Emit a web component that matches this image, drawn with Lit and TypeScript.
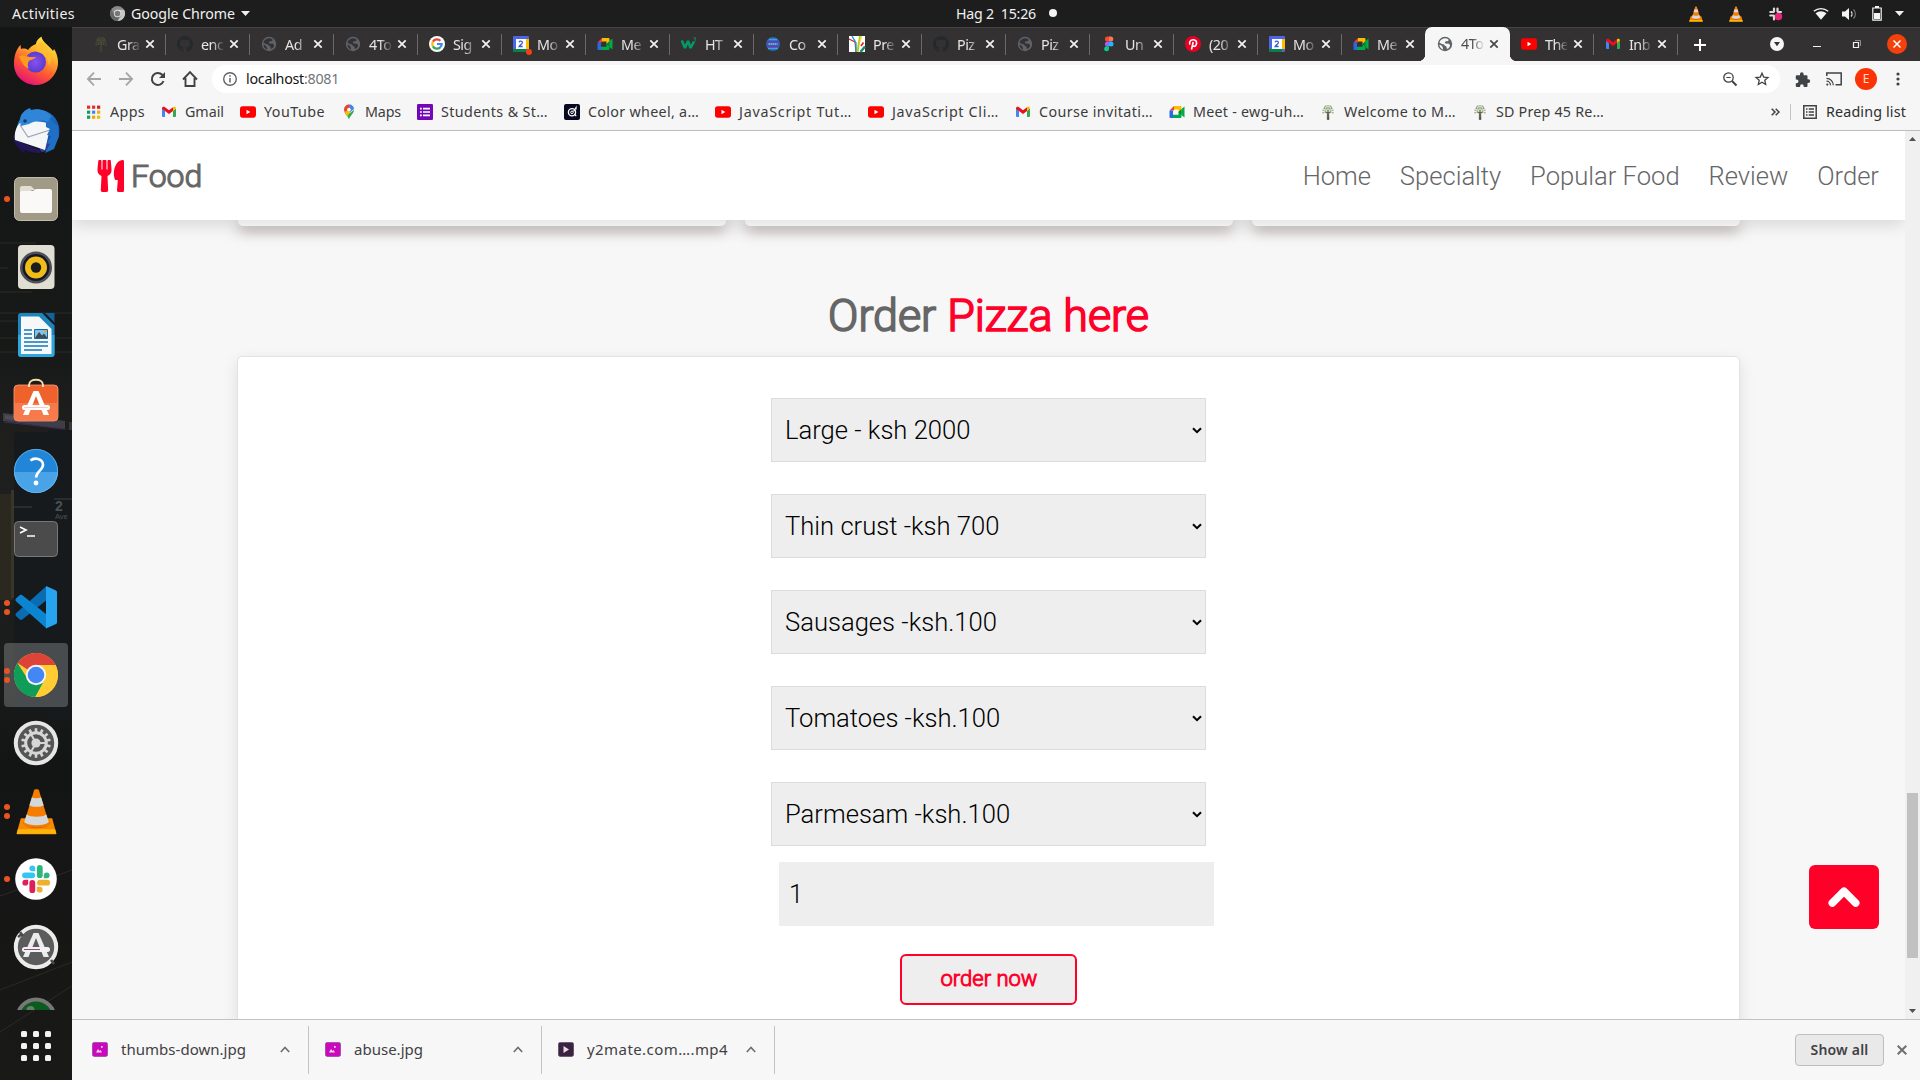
import { LitElement, html, svg, css, nothing, TemplateResult } from "lit";
import { customElement, property, query } from "lit/decorators.js";
import { classMap } from "lit/directives/class-map.js";

/* ---------- small icons (16 x 16 grid) ---------- */
const g16 = (body: unknown, size = 16) =>
  html`<svg width=${size} height=${size} viewBox="0 0 16 16" fill="none">${body}</svg>`;

const tree = (dark: boolean) => g16(svg`
  <g stroke=${dark ? "#4c5236" : "#8fa27a"} stroke-width="1.300" stroke-dasharray="1.500 .7">
    <path d="M8 8L2.500 6M8 7L4 2.500M8 7V1M8 7l4-4.500M8 8l5.500-2M6 8L2 9M10 8l4 1M3.500 4.500l3 1M12.500 4.500l-3 1M5.500 1.500l1.500 3M10.500 1.500l-1.500 3"/></g>
  <path d="M7.200 15.500L7.500 8h1l.5 7.500zM6 8l2 2.500L10 8" fill=${dark ? "#3e4630" : "#4c4a38"} stroke=${dark ? "#3e4630" : "#4c4a38"} stroke-width=".6"/>`);
const github = () => g16(svg`<path fill="#24292e" d="M8 0a8 8 0 0 0-2.530 15.590c.4.070.55-.17.55-.38v-1.500C3.780 14.200 3.300 12.800 3.300 12.800c-.36-.92-.9-1.180-.9-1.180-.72-.5.060-.48.060-.48.800.060 1.230.82 1.230.82.71 1.220 1.870.87 2.330.66.070-.52.280-.87.500-1.070C4.750 11.340 2.880 10.650 2.880 7.580c0-.87.310-1.580.82-2.150-.08-.2-.36-1.020.080-2.120 0 0 .67-.21 2.200.82a7.600 7.600 0 0 1 4 0c1.530-1.030 2.200-.82 2.200-.82.440 1.100.160 1.920.080 2.120.510.570.820 1.280.820 2.150 0 3.080-1.880 3.760-3.660 3.960.290.240.540.720.540 1.480v2.200c0 .21.150.46.550.38A8 8 0 0 0 8 0z"/>`);
const globe = (bg: string) => g16(svg`<circle cx="8" cy="8" r="7.200" fill="#5f6368"/>
  <path fill=${bg} d="M8.500 2.200c1.500.2 2.600.8 3.500 1.800l-1.600 1.200-1.700.1-1 1.300 1.300 1.200 2.200-.2 1.800 1.200c.3 1.500-.7 3-2 3.900l-1.300-.2-.2-2-1.700-.7-.6-1.400-2.400-.5L2.400 6.500C3 4 5.500 2.200 8.500 2.200zM2.300 8.600l2.500 1.200 1 1.600.4 2.300C4 13 2.500 11 2.300 8.600z"/>`);
const google = () => g16(svg`<circle cx="8" cy="8" r="8" fill="#fff"/>
  <g stroke-width="2.200"><path stroke="#ea4335" d="M3.900 5.600A4.700 4.700 0 0 1 11.400 4.800"/><path stroke="#fbbc05" d="M3.900 10.400a4.800 4.800 0 0 1 0-4.800"/>
  <path stroke="#34a853" d="M3.900 10.400a4.700 4.700 0 0 0 7.300 1"/><path stroke="#4285f4" d="M8 8h4.700a4.700 4.700 0 0 1-1.600 3.500"/></g>`);
const calendar = (dot: boolean) => html`<svg width="20" height="20" viewBox="0 0 20 20" fill="none" class="cal">${svg`
  <rect width="16" height="16" rx="1" fill="#4b67e8"/><path fill="#fbbc04" d="M13 3h3v10h-3z"/><path fill="#0b8043" d="M0 13h13v3H0z"/>
  <path fill="#fff" d="M3 3h10v10H3z"/><path d="M6 6.200c.8-1.600 3.600-1.200 3.400.6-.1 1.300-2.300 2-3.300 3.700h3.600" stroke="#3c5fd0" stroke-width="1.300"/>
  ${dot ? svg`<circle cx="16" cy="16" r="3" fill="#f4400b"/>` : nothing}`}</svg>`;
const meet = () => g16(svg`<path fill="#ea4335" d="M.5 6.500L5 2v4.500z"/><path fill="#fbbc04" d="M5 2h6.500a1 1 0 0 1 1 1v3.500L9.500 8V5.500H5z"/>
  <path fill="#2f66e8" d="M.5 6.500H4v5H.5zM.5 11.500H4V14H1.500a1 1 0 0 1-1-1z"/><path fill="#00ac47" d="M4 10.800h5.500V8l3-1.500V13a1 1 0 0 1-1 1H4z"/>
  <path fill="#00832d" d="M9.500 8l3-3v6z"/><path fill="#00ac47" d="M12.500 5L15.500 2.600v10.800L12.500 11z"/>`);
const w3 = () => g16(svg`<path d="M.8 4.500L4 12l3-7 2.500 7L13 5.500" stroke="#059862" stroke-width="2.600" stroke-linejoin="bevel"/>
  <path d="M12.600 1.800h2.200l-1.200 1.500c1.600 0 1.500 2.200-.2 2.100" stroke="#059862" stroke-width=".9"/>`);
const coolors = () => g16(svg`<circle cx="8" cy="8" r="7" fill="#2c62b8"/><path d="M4 3.500h8M3 12.500h10" stroke="#39a6d8" stroke-width="1.500"/>
  <path d="M1.800 6h12.400M2.500 10.500h11" stroke="#6b3fa8" stroke-width="1.600"/><path d="M3.500 8h9" stroke="#cfe6fa" stroke-width="1.200" stroke-dasharray="1.500 .5"/>`);
const prezi = () => g16(svg`<path fill="#fff" d="M0 0h16v16H0z"/><path d="M0 3l6 3 1 10" stroke="#d22" stroke-width="1.200"/><path d="M3 0l4 7v9" stroke="#0aa0e0" stroke-width="1.400"/>
  <path d="M11 0L8.500 16" stroke="#b8cc10" stroke-width="2"/><path d="M14.500 6.500L12 10" stroke="#e22" stroke-width="1.800"/><path d="M16 10.500L11.500 16" stroke="#0a8f6a" stroke-width="2.400"/><path d="M13 0l-2 6" stroke="#fbe14a"/>`);
const figma = () => html`<svg width="16" height="16" viewBox="0 0 16 16">${svg`<path fill="#f24e1e" d="M8 .5H6.400a2.500 2.500 0 0 0 0 5H8z"/><path fill="#ff7262" d="M8 .5h1.800a2.500 2.500 0 0 1 0 5H8z"/>
  <path fill="#a259ff" d="M8 5.500H6.400a2.500 2.500 0 0 0 0 5H8z"/><circle cx="10" cy="8" r="2.500" fill="#1abcfe"/><path fill="#0acf83" d="M6.400 10.500H8V13a2.400 2.400 0 1 1-1.600-2.500z"/>`}</svg>`;
const pinterest = () => g16(svg`<circle cx="8" cy="8" r="8" fill="#e60023"/><path d="M5 8.700C3.700 6.500 5.300 3.700 8.200 3.700c3.500 0 4.300 3.800 2.500 5.900-1 1.100-2.600.9-3-.2M8.200 6L6.500 13.500" stroke="#fff" stroke-width="1.600"/>`);
const youtube = () => g16(svg`<rect y="2.300" width="16" height="11.400" rx="2.600" fill="#f00"/><path fill="#fff" d="M6.500 5.800v4.400L10.300 8z"/>`);
const gmail = () => g16(svg`<path fill="#4285f4" d="M1 4.500l3 2.300V13H2a1 1 0 0 1-1-1z"/><path fill="#34a853" d="M12 6.800l3-2.300V12a1 1 0 0 1-1 1h-2z"/>
  <path fill="#ea0f1e" d="M1 4.500C1 2.800 2.800 2.400 4 3.300L8 6.300l4-3V7l-4 3-4-3-3-2z"/><path fill="#fbbc04" d="M12 3.300c1.300-.9 3-.4 3 1.200L12 7z"/>`);
const apps = () => g16(svg`${[0, 1, 2].map(r => [0, 1, 2].map(c => svg`<rect x=${1 + c * 5} y=${1.600 + r * 5} width="3.200" height="3.200"
  fill=${[["#e53030", "#e53030", "#e02020"], ["#12a058", "#4285f4", "#f2b10c"], ["#12a058", "#f5a30c", "#f5b90c"]][r][c]}/>`))}`);
const maps = () => g16(svg`<path fill="#34a853" d="M3.500 8.500c1 2 3.500 3.500 4.500 7 1-4 5-6 5-9.800L9 9z"/><path fill="#fbbc04" d="M3.500 8.500L9 3l2 3-4.500 6z"/>
  <path fill="#4285f4" d="M8 .5c2 0 4.500 1.500 5 4.500L9 8z"/><path fill="#ea4335" d="M3 5.500C3 2.500 5.500.5 8 .5L9 3 4 8.500A6 6 0 0 1 3 5.500z"/><circle cx="8" cy="5.500" r="1.800" fill="#fff"/><path fill="#4285f4" d="M8.500.6c2 .2 4 1.600 4.300 3.600L9.500 5z"/>`);
const forms = () => g16(svg`<rect width="16" height="16" rx="1.300" fill="#7406b8"/><path d="M3 4.600h1.800M3 8h1.800M3 11.400h1.800M6 4.600h7M6 8h7M6 11.400h7" stroke="#fff" stroke-width="1.700"/>`);
const wheel = () => g16(svg`<rect width="16" height="16" rx="2" fill="#080a20"/><circle cx="8" cy="8.300" r="3.600" stroke="#fff" stroke-width="1.300"/><circle cx="8" cy="8.300" r="1.300" stroke="#fff"/><path d="M9.500 7.500L12 3.500v2M10.500 10l1.700 2.200" stroke="#fff" stroke-width="1.200"/>`);

const cone = (size: number) => html`<svg width=${size} height=${size} viewBox="0 0 48 48">${svg`
  <path fill="#f78a00" d="M8 31h32l4.300 15.500a.7.700 0 0 1-.7.800H4.400a.7.700 0 0 1-.7-.8z"/><path fill="#fcb40a" d="M5 42h38l1.300 4.600H3.700z"/>
  <path fill="#c85f06" d="M10.500 35h27c1 8-28 8-27 0z"/>
  <path fill="#f57c00" d="M21.500 2.200c0-1.400 5-1.400 5 0L37 37c-2 4.500-24 4.500-26 0z"/>
  <path fill="#d5d8db" d="M19.300 9.500c2 1.400 7.400 1.400 9.400 0l2.600 8c-3 2.300-11.600 2.300-14.600 0zM13.900 27c4 3 16.200 3 20.200 0l2.500 8c-5 4-20.200 4-25.200 0z"/>`}</svg>`;

/* ---------- dock icons (48 x 48 grid) ---------- */
const g48 = (body: unknown) => html`<svg width="48" height="48" viewBox="0 0 48 48" fill="none">${body}</svg>`;
const spokes = Array.from({ length: 14 }, (_, i) => i * (360 / 14));

const dockIcons: { art: () => TemplateResult; dots?: number; active?: boolean }[] = [
  { art: () => g48(svg`<defs><linearGradient id="ff" x1=".8" y1="0" x2=".3" y2="1"><stop offset="0" stop-color="#fff044"/><stop offset=".35" stop-color="#ffb02a"/><stop offset=".65" stop-color="#ff5a30"/><stop offset="1" stop-color="#e4107a"/></linearGradient>
    <radialGradient id="fp"><stop offset="0" stop-color="#8a50f0"/><stop offset="1" stop-color="#5a3bd0"/></radialGradient></defs>
    <path fill="url(#ff)" d="M4 13c2-4 3-6 4.500-7l.5 4c2.500-.7 5-.5 7 1 2-3 5-5 8-6 0-3 3-6 5.500-7.500C30 3 38 7 41 12l1-2c4 6 5 14 3 20-3 9-11 16-21 16C12 46 2 37 2 25c0-5 .5-8 2-12z"/>
    <circle cx="23.500" cy="23" r="10.500" fill="url(#fp)"/><path fill="#ff9a20" d="M7 17c5-2 8 2 17 1-2 3-5 2-7 4-2 3-1 6 0 8-6-3-8-8-10-13z"/><path fill="#ffbd30" d="M30 3c9 6 11 16 7 24-1-10-6-13-12-14l-1-6z" opacity=".75"/>`) },
  { art: () => g48(svg`<defs><linearGradient id="tb" x1="0" y1="0" x2=".6" y2="1"><stop offset="0" stop-color="#3593e2"/><stop offset=".55" stop-color="#1b66bd"/><stop offset="1" stop-color="#2e3c98"/></linearGradient></defs>
    <path fill="#22144e" d="M1 28c0 8 5 15 12 18l-1-4 10 4 6-6z"/><circle cx="26" cy="24" r="21.500" fill="url(#tb)"/>
    <path fill="#141515" d="M3 33l12 13 15 2-3-8z"/><path fill="#24165a" d="M3 33l27 11-2 2C17 46 7 42 3 33z"/>
    <path fill="#f4f6f8" d="M8 16c6-3 24-2 31 1L33 43 3 33C2 26 4 20 8 16z"/><path d="M8 18l8 12 22-7" stroke="#9aa4b0" stroke-width="1.100"/>
    <path fill="#1e70c4" d="M34 9l12 10 1 10-5 13-9 4 5-9-3-1 4-7-4-1 3-6-4-2z"/>
    <path fill="#2f86d8" d="M9 19C6 10 10 4 18 1l1 2c8-2 16 1 20 6l-3 6c-7-3-13-1-19 2z"/><circle cx="13" cy="14" r="1.800" fill="#173a66"/>`) },
  { dots: 1, art: () => g48(svg`<rect x="2.500" y="2.500" width="43" height="43" rx="5" fill="#a19a86" stroke="#c2bcab"/><path fill="#e3ded2" d="M8 13a2 2 0 0 1 2-2h9l4 4h-3l-12 8z"/><path fill="#faf9f7" d="M8 18a2 2 0 0 1 2-2h11l3-2h14a2 2 0 0 1 2 2v20a2 2 0 0 1-2 2H10a2 2 0 0 1-2-2z"/>`) },
  { art: () => g48(svg`<rect x="6" y="2" width="36.500" height="44" rx="4" fill="#e0ddd2"/><circle cx="24" cy="24.500" r="16" fill="#4e4f56"/><circle cx="24" cy="24.500" r="13.500" fill="#16162a"/><circle cx="24" cy="24.500" r="11" fill="#f0bd18"/><circle cx="24" cy="24.500" r="5.200" fill="#1c1c1c"/>`) },
  { art: () => g48(svg`<path fill="#1d86bd" d="M9 2h21l12.500 12.500V43a3 3 0 0 1-3 3H9a3 3 0 0 1-3-3V5a3 3 0 0 1 3-3z"/><path fill="#2fa6dc" d="M6 24h36.500v19a3 3 0 0 1-3 3H9a3 3 0 0 1-3-3z"/><path fill="#f6f8fa" d="M9 5.500h18L39.500 18v25H9z"/><path fill="#11639a" d="M33 2h9.500v9.500z"/>
    <path d="M12 19h8M12 23h8M12 27h8M12 31h24M12 35h24M12 39h18" stroke="#1477b8" stroke-width="1.700"/><path fill="#7cc4ea" stroke="#16689c" d="M22.500 18.500h13v9h-13z"/><path fill="#404b54" d="M23 27l4-6 3 3.500 2-2 3.500 4.500z"/><circle cx="33.500" cy="20" r="1.300" fill="#f5a020"/>`) },
  { art: () => g48(svg`<rect x="2" y="6" width="44" height="36" rx="4" fill="#f0622c" stroke="#f6a080" stroke-width=".8"/><path fill="#f8845a" opacity=".7" d="M2.500 24h43v14a4 4 0 0 1-4 4h-35a4 4 0 0 1-4-4z"/>
    <path d="M17 8V6c0-7 14-7 14 0v2" stroke="#f6dcae" stroke-width="2"/><path fill="#fff" d="M21.500 12h5L37 36h-5.500L24 17l-7.500 19H11z"/><rect x="10" y="26" width="28" height="5" rx="2.500" fill="#fff"/><path d="M12 28.500h24" stroke="#f3c0b8" stroke-width=".8"/>`) },
  { art: () => g48(svg`<circle cx="24" cy="24" r="22" fill="#2286d8"/><path fill="#4aa3e6" d="M2 25a22 21 0 0 0 44 0z"/><circle cx="24" cy="24" r="21.600" stroke="#69b7ee" stroke-width=".8"/><path d="M18.500 13.500c4-3.500 12-2 12.500 4 .4 5.500-6.500 6-7 13" stroke="#fff" stroke-width="2.600"/><circle cx="24" cy="36" r="2.400" fill="#fff"/>`) },
  { art: () => g48(svg`<rect x="2.500" y="6.500" width="43" height="35" rx="4" fill="#4b4b4b" stroke="#787878"/><path d="M8 12l6 3-6 3M15 21h8" stroke="#fff" stroke-width="1.700"/>`) },
  { dots: 2, art: () => g48(svg`<path fill="#0a6cb2" d="M4 33l3.500 3.300c.8.700 2 .8 2.800.1L34 17.500V3.500L4 30.200a2 2 0 0 0 0 2.800z"/><path fill="#0b85d0" d="M4 15.500l3.500-3.200c.8-.7 2-.8 2.800-.1L34 31v14L4 18.300a2 2 0 0 1 0-2.800z"/><path fill="#27a4f0" d="M34 3l10 4.500c.7.400 1 1 1 1.700v30c0 .8-.4 1.500-1 1.800L34 45.500z"/>`) },
  { dots: 2, active: true, art: () => g48(svg`<circle cx="24" cy="24" r="22" fill="#fc3"/><path fill="#dd4437" d="M24 24L5.500 12A22 22 0 0 1 43.500 14H24z"/><path fill="#109d58" d="M5.500 12a22 22 0 0 0 17.800 34L33 28l-9-4-9 3z"/><path fill="#fc3" d="M43.500 14A22 22 0 0 1 23.300 46L33 29l-2-15z"/><circle cx="24" cy="24" r="10.200" fill="#f4f4f4"/><circle cx="24" cy="24" r="8.300" fill="#4486f4"/>`) },
  { art: () => g48(svg`<circle cx="24" cy="24" r="20.200" fill="#555" stroke="#e6e6e6" stroke-width="4"/><circle cx="24" cy="24" r="10.300" stroke="#d6d6d6" stroke-width="3"/>${spokes.map(a => svg`<path transform=${`rotate(${a} 24 24)`} fill="#d6d6d6" d="M22.700 13v-3.800h2.600V13z"/>`)}
    <circle cx="24" cy="24" r="4.600" fill="#d6d6d6"/><path d="M24 24h10M24 24l-5-8.700M24 24l-5 8.700" stroke="#d6d6d6" stroke-width="2"/>`) },
  { dots: 2, art: () => cone(47) },
  { dots: 1, art: () => g48(svg`<circle cx="24" cy="24" r="20.800" fill="#fff"/><g stroke-width="5.800" stroke-linecap="round">
    <path stroke="#36c5f0" d="M13 20.300h7.200"/><path stroke="#2eb67d" d="M27.800 13v7.200"/><path stroke="#ecb22e" d="M28 27.700h7.200"/><path stroke="#e01e5a" d="M20.300 28v7.200"/></g>
    <path fill="#36c5f0" d="M23.200 16.200h-2.900a2.900 2.900 0 1 1 2.900-2.900z"/><path fill="#2eb67d" d="M31.800 23.200v-2.900a2.900 2.900 0 1 1 2.900 2.900z"/><path fill="#ecb22e" d="M24.800 31.800h2.900a2.900 2.900 0 1 1-2.900 2.900z"/><path fill="#e01e5a" d="M16.200 24.800v2.900a2.900 2.900 0 1 1-2.900-2.900z"/>`) },
  { art: () => g48(svg`<circle cx="24" cy="24" r="20.200" fill="#5c5c5c" stroke="#ececec" stroke-width="4"/><path d="M8 9l3 4M39 37l3 4M6 14l4-3" stroke="#4a4a4a" stroke-width="2.500"/><path fill="#ececec" d="M21.500 10h5L37 34h-5.500L24 15l-7.500 19H11z"/><rect x="10" y="24" width="28" height="5" rx="2.500" fill="#f2f2f2"/><path d="M12 26.500h16" stroke="#8c4a8c"/>`) },
  { art: () => g48(svg`<circle cx="24" cy="27" r="18.500" fill="#0b5a1e" stroke="#777" stroke-width="4"/><circle cx="18.500" cy="19" r="4" fill="#5f7f66"/>`) },
];

/* A single line of text tracked so that it fills a given width. */
@customElement("fit-text")
export class FitText extends LitElement {
  static styles = css`
    :host { display: inline-block; white-space: pre; }
    .line { display: inline-block; }
  `;
  @property() text = "";
  @property({ type: Number }) w = 0;
  @query(".line") line!: HTMLElement;

  updated() {
    this.line.style.letterSpacing = "0px";
    const natural = this.line.getBoundingClientRect().width;
    this.line.style.letterSpacing = `${(this.w - natural) / this.text.length}px`;
  }
  render() {
    return html`<span class="line">${this.text}</span>`;
  }
}
const fit = (text: string, w: number) => html`<fit-text .text=${text} .w=${w}></fit-text>`;

@customElement("desktop-dock")
export class DesktopDock extends LitElement {
  static styles = css`
    :host { display: flex; flex-direction: column; width: 72px; height: 1053px; background: #141515; position: relative; overflow: hidden; font-family: "Liberation Sans", sans-serif; }
    .wall { position: absolute; inset: 0; }
    .list { display: flex; flex-direction: column; padding-top: 2px; height: 981px; overflow: hidden; position: relative; }
    .slot { display: flex; align-items: center; flex: none; height: 68px; position: relative; }
    .plate { display: flex; align-items: center; justify-content: center; width: 64px; height: 64px; margin-left: 4px; border-radius: 4px; }
    .plate.active { background: rgba(255, 255, 255, 0.22); }
    .dots { position: absolute; left: 4px; top: 0; bottom: 0; display: flex; flex-direction: column; justify-content: center; gap: 3px; }
    .dot { width: 6px; height: 6px; border-radius: 50%; background: #e95420; }
    .grid { display: grid; grid-template-columns: repeat(3, 6px); gap: 6px; margin: 21px auto 0 21px; position: relative; }
    .grid i { width: 6px; height: 6px; border-radius: 1.500px; background: #f3f3f3; }
    svg { display: block; overflow: visible; }
  `;
  render() {
    return html`
      <svg class="wall" width="72" height="1053" viewBox="0 27 72 1053">${svg`
        <defs><linearGradient id="wg" x1="0" y1="0" x2="0" y2="1"><stop offset="0" stop-color="#141515"/><stop offset=".3" stop-color="#171918"/><stop offset=".4" stop-color="#1f201e"/><stop offset=".6" stop-color="#1b1d1d"/><stop offset=".7" stop-color="#131414"/><stop offset="1" stop-color="#191917"/></linearGradient></defs>
        <path fill="url(#wg)" d="M0 27h72v1053H0z"/>
        <path d="M0 243h36M0 268h8M0 292h32M0 313h72M0 321h40M0 338h72M0 352h72" stroke="#302f26" stroke-width="1" opacity=".8"/>
        <path fill="#171a1d" d="M14 432h34v280H14zM48 430h24v290H48z"/><path fill="#3f3e46" d="M3 413l62 8v8L3 421z"/><path d="M4 422l61 7" stroke="#3a2e62" stroke-width="1.200"/>
        <path fill="#6a6a6e" opacity=".35" d="M5 415l20 3v4l-20-3zM69 422h3v8h-3z"/>
        <path fill="#2b281f" d="M0 494h13v106H0z"/><path fill="#38352a" d="M11 490h3v108h-3z"/><path d="M54 499h18M14 507h18" stroke="#3c4042"/>
        <path d="M0 896l72-26M0 990l72-28M0 1032l72-46" stroke="#2a2a28"/>
        <text x="55" y="511" font-size="14" font-weight="700" fill="#4c5052">2</text><text x="55" y="519" font-size="7.500" fill="#4c5052">Ave</text>`}</svg>
      <div class="list">${dockIcons.map(d => html`
        <div class="slot">
          <div class=${classMap({ plate: true, active: !!d.active })}>${d.art()}</div>
          <div class="dots">${Array.from({ length: d.dots ?? 0 }, () => html`<span class="dot"></span>`)}</div>
        </div>`)}</div>
      <div class="grid">${Array.from({ length: 9 }, () => html`<i></i>`)}</div>`;
  }
}

const tabs: [() => TemplateResult, string][] = [
  [() => tree(true), "Gra"], [github, "enc"], [() => globe("#333132"), "Ad"], [() => globe("#333132"), "4To"], [google, "Sig"],
  [() => calendar(true), "Mo"], [meet, "Me"], [w3, "HT"], [coolors, "Co"], [prezi, "Pre"], [github, "Piz"], [() => globe("#333132"), "Piz"],
  [figma, "Un"], [pinterest, "(20"], [() => calendar(false), "Mo"], [meet, "Me"], [() => globe("#f6f6f6"), "4To"], [youtube, "The"], [gmail, "Inb"],
];
const ACTIVE_TAB = 16;

const bookmarks: [() => TemplateResult, string, number][] = [
  [apps, "Apps", 35], [gmail, "Gmail", 39], [youtube, "YouTube", 61], [maps, "Maps", 36], [forms, "Students & St…", 107],
  [wheel, "Color wheel, a…", 111], [youtube, "JavaScript Tut…", 113], [youtube, "JavaScript Cli…", 107], [gmail, "Course invitati…", 114],
  [meet, "Meet - ewg-uh…", 111], [() => tree(false), "Welcome to M…", 112], [() => tree(false), "SD Prep 45 Re…", 108],
];

@customElement("browser-chrome")
export class BrowserChrome extends LitElement {
  static styles = css`
    :host { display: block; font: 14.300px "Noto Sans", sans-serif; color: #3c3c3c; }
    svg { display: block; overflow: visible; flex: none; }
    .strip { display: flex; height: 34px; box-sizing: border-box; padding-left: 9px; background: #333132; border-top: 1px solid #454344; color: #e6e6e6; }
    .tab { display: flex; align-items: center; box-sizing: border-box; width: 84px; padding: 0 10px 1px 12px; position: relative; }
    .tab::before { content: ""; position: absolute; left: 0; top: 6px; width: 1px; height: 21px; background: #6b696a; }
    .tab.plain::before { display: none; }
    .ico { width: 16px; height: 16px; flex: none; }
    .label { width: 22px; white-space: nowrap; margin-left: 8px; letter-spacing: -0.5px; -webkit-mask-image: linear-gradient(90deg, #000 50%, rgba(0, 0, 0, 0.15)); flex: none; }
    .close { margin-left: 6px; }
    .tab.active { background: #f6f6f6; color: #4a4c50; border-radius: 7px 7px 0 0; width: 85px; margin: -1px -1px 0 0; z-index: 1; }
    .tab.active::after { content: ""; position: absolute; bottom: 0; left: -7px; right: -7px; height: 7px;
      background: radial-gradient(circle at 0 0, transparent 7px, #f6f6f6 7.500px) left / 7px 7px no-repeat, radial-gradient(circle at 100% 0, transparent 7px, #f6f6f6 7.500px) right / 7px 7px no-repeat; }
    .plus { display: flex; align-items: center; width: 46px; box-sizing: border-box; padding-left: 16px; border-left: 1px solid #6b696a; height: 21px; margin-top: 6px; }
    .win { display: flex; align-items: center; margin-left: auto; padding-right: 3px; padding-bottom: 1px; }
    .cell40 { width: 40px; display: flex; justify-content: center; }
    .bar { display: flex; align-items: center; height: 36px; background: #f6f6f6; padding: 0 6px; }
    .cell { width: 32px; display: flex; justify-content: center; flex: none; }
    .url { display: flex; align-items: center; flex: 1; height: 28px; margin: 0 6px; border-radius: 14px; background: #fff; padding: 0 2px 0 11px; box-sizing: border-box; }
    .url .info { margin-right: 9px; }
    .url fit-text { line-height: 20px; margin-top: -2px; }
    .host { color: #151515; }
    .port { color: #72757a; flex: 1; }
    .avatar { width: 22px; height: 22px; border-radius: 50%; background: #fb3305; color: #ffe0d8; font-size: 12px; line-height: 22px; text-align: center; }
    .marks { display: flex; align-items: center; height: 29px; padding: 0 14px 4px; background: #f6f6f6; border-bottom: 1px solid #bdbdbd; gap: 16px; }
    .mark { display: flex; align-items: center; gap: 8px; height: 29px; }
    .mark fit-text { line-height: 20px; }
    .more { display: flex; align-items: center; margin-left: auto; }
    .rule { width: 1px; height: 16px; background: #c4c4c4; margin: 0 12px 0 10px; }
    .list-ico { margin-right: 9px; }
    .list { color: #2e2e2e; }
  `;
  render() {
    const x = (c: string) => html`<svg class="close" width="10" height="10" viewBox="0 0 10 10"><path d="M1.300 1.300l7.400 7.400M8.700 1.300L1.300 8.700" stroke=${c} stroke-width="1.700"/></svg>`;
    const s = "#3f4246";
    return html`
      <div class="strip">
        ${tabs.map(([ico, label], i) => html`
          <div class=${classMap({ tab: true, active: i === ACTIVE_TAB, plain: i === 0 || i === ACTIVE_TAB || i === ACTIVE_TAB + 1 })}>
            <span class="ico">${ico()}</span><span class="label">${label}</span>${x(i === ACTIVE_TAB ? "#45474b" : "#f4f4f4")}
          </div>`)}
        <div class="plus"><svg width="12" height="12" viewBox="0 0 12 12"><path d="M6 0v12M0 6h12" stroke="#fff" stroke-width="2"/></svg></div>
        <div class="win">
          <div class="cell40"><svg width="14" height="14" viewBox="0 0 14 14"><circle cx="7" cy="7" r="7" fill="#f6f6f6"/><path fill="#333132" d="M4 5h6l-3 4.300z"/></svg></div>
          <div class="cell40"><svg width="8" height="8" viewBox="0 0 8 8"><path d="M0 6.500h8" stroke="#f2f2f2"/></svg></div>
          <div class="cell40"><svg width="8" height="8" viewBox="0 0 8 8" fill="none"><path d="M.5 2.500h5v5h-5z" stroke="#f2f2f2" stroke-width="1.200"/><path d="M2 .5h5.500V6" stroke="#a5a4a5" stroke-width=".8"/></svg></div>
          <div class="cell40"><svg width="20" height="20" viewBox="0 0 20 20"><circle cx="10" cy="10" r="10" fill="#f4400b"/><path d="M6.500 6.500l7 7M13.500 6.500l-7 7" stroke="#fff" stroke-width="1.500"/></svg></div>
        </div>
      </div>
      <div class="bar">
        <div class="cell"><svg width="14" height="14" viewBox="0 0 14 14" fill="none"><path d="M14 7H1M7 .7L.9 7 7 13.300" stroke="#a5a5a5" stroke-width="1.800"/></svg></div>
        <div class="cell"><svg width="14" height="14" viewBox="0 0 14 14" fill="none"><path d="M0 7h13M7 .7L13.100 7 7 13.300" stroke="#a5a5a5" stroke-width="1.800"/></svg></div>
        <div class="cell"><svg width="14" height="14" viewBox="0 0 14 14" fill="none"><path d="M12.500 9A6 6 0 1 1 11.200 2.800L13 4.600" stroke=${s} stroke-width="2"/><path d="M14 0v6H8z" fill=${s}/></svg></div>
        <div class="cell"><svg width="16" height="16" viewBox="0 0 16 16" fill="none"><path d="M1 8.500L8 1.200l7 7.300M3.500 7v8h9V7" stroke=${s} stroke-width="1.900"/></svg></div>
        <div class="url">
          <svg class="info" width="14" height="14" viewBox="0 0 14 14" fill="none"><circle cx="7" cy="7" r="6.300" stroke="#5f6368" stroke-width="1.400"/><path d="M7 6v4.500M7 3.300v1.500" stroke="#5f6368" stroke-width="1.500"/></svg>
          <span class="host">${fit("localhost", 58)}</span><span class="port">${fit(":8081", 35)}</span>
          <div class="cell"><svg width="14" height="14" viewBox="0 0 14 14" fill="none"><circle cx="5.500" cy="5.500" r="4.700" stroke=${s} stroke-width="1.300"/><path d="M9 9l4.500 4.500" stroke=${s} stroke-width="1.900"/><path d="M3.300 5.500h4.400" stroke=${s}/></svg></div>
          <div class="cell"><svg width="14" height="14" viewBox="0 0 14 14" fill="none"><path d="M7 1.200l1.700 3.900 4.300.4-3.200 2.800.9 4.200L7 10.300l-3.700 2.200.9-4.200L1 5.500l4.300-.4z" stroke=${s} stroke-width="1.300"/></svg></div>
        </div>
        <div class="cell"><svg width="15" height="15" viewBox="0 0 15 15"><path fill=${s} d="M5 3.200V2a1.800 1.800 0 0 1 3.600 0v1.200h2.900a1 1 0 0 1 1 1v3h.8a1.900 1.900 0 0 1 0 3.800h-.8v3a1 1 0 0 1-1 1H8.700v-.9a1.800 1.800 0 0 0-3.600 0v.9H1.800a1 1 0 0 1-1-1v-2.800h.8a1.900 1.900 0 0 0 0-3.800H.8V4.200a1 1 0 0 1 1-1z"/></svg></div>
        <div class="cell"><svg width="16" height="14" viewBox="0 0 16 14" fill="none"><path d="M.8 4V1h14.400v11.800H9.500" stroke=${s} stroke-width="1.500"/><path d="M.5 6.300A7 7 0 0 1 7.300 13.300M.5 9.200a4 4 0 0 1 4 4" stroke=${s} stroke-width="1.300"/><circle cx="1.300" cy="12.600" r="1.100" fill=${s}/></svg></div>
        <div class="cell"><div class="avatar">E</div></div>
        <div class="cell"><svg width="4" height="14" viewBox="0 0 4 14" fill=${s}><circle cx="2" cy="2" r="1.600"/><circle cx="2" cy="7" r="1.600"/><circle cx="2" cy="12" r="1.600"/></svg></div>
      </div>
      <div class="marks">
        ${bookmarks.map(([ico, label, w]) => html`<div class="mark"><span class="ico">${ico()}</span>${fit(label, w)}</div>`)}
        <div class="more">
          <svg width="9" height="8" viewBox="0 0 9 8" fill="none"><path d="M.7.7L4 4 .7 7.300M4.700.7L8 4 4.700 7.300" stroke=${s} stroke-width="1.500"/></svg>
          <span class="rule"></span>
          <svg class="list-ico" width="14" height="14" viewBox="0 0 14 14" fill="none"><path d="M.8.800h12.400v12.400H.8z" stroke=${s} stroke-width="1.500"/><path d="M3 4h1.500M3 7h1.500M3 10h1.500M5.700 4H11M5.700 7H11M5.700 10H11" stroke=${s} stroke-width="1.400"/></svg>
          <span class="list">${fit("Reading list", 80)}</span>
        </div>
      </div>`;
  }
}

const options = ["Large - ksh 2000", "Thin crust -ksh 700", "Sausages -ksh.100", "Tomatoes -ksh.100", "Parmesam -ksh.100"];

@customElement("food-page")
export class FoodPage extends LitElement {
  static styles = css`
    :host { display: flex; height: 888px; background: #f7f7f7; font-family: Roboto, sans-serif; font-weight: 300; position: relative; overflow: hidden; }
    svg { display: block; }
    .view { flex: 1; display: flex; flex-direction: column; overflow: hidden; }
    header { display: flex; align-items: center; height: 89px; padding: 0 26px 0 25px; background: #fff; box-shadow: 0 5px 16px rgba(0, 0, 0, 0.13); z-index: 2; color: #666; flex: none; }
    .brand { font-size: 32px; margin-left: 6px; -webkit-text-stroke: 1.200px #666; }
    nav { display: flex; gap: 28.800px; margin-left: auto; font-size: 25.600px; }
    .cards { display: grid; grid-template-columns: repeat(3, 1fr); gap: 19px; padding: 0 165px 0 166px; }
    .card { height: 6px; background: #fff; border-radius: 0 0 5px 5px; box-shadow: 0 4px 14px rgba(90, 60, 60, 0.62); }
    h1 { margin: 0; padding-top: 55px; text-align: center; font-size: 44.800px; line-height: 70px; font-weight: 300; color: #666; -webkit-text-stroke: 1.700px #666; height: 75px; }
    h1 .hot { color: #ff0029; -webkit-text-stroke-color: #ff0029; }
    form { display: flex; flex-direction: column; align-items: center; flex: none; margin: 5px 165px 0; height: 720px; box-sizing: border-box; padding-top: 41px; background: #fff; border: 1px solid #e2e2e2; border-radius: 5px; box-shadow: 0 5px 16px rgba(0, 0, 0, 0.1); }
    .field { display: flex; align-items: center; justify-content: space-between; box-sizing: border-box; width: 435px; height: 64px; padding: 0 3px 0 13px; margin-bottom: 32px; background: #eee; border: 1px solid #dcdcdc; font-size: 25.600px; color: #000; flex: none; }
    .field.last { margin-bottom: 16px; }
    .qty { border-color: #eee; margin: 0 0 28px 16px; padding-left: 9px; }
    .submit { box-sizing: border-box; width: 177px; height: 51px; border: 2px solid #ff0029; border-radius: 6px; background: #eee; color: #ff0029; font-size: 22px; line-height: 46px; text-align: center; -webkit-text-stroke: 1px #ff0029; padding-left: 1px; }
    .scroll { width: 15px; background: #f0f0f0; display: flex; flex-direction: column; align-items: center; box-sizing: border-box; padding: 6px 0; }
    .thumb { width: 11px; height: 165px; background: #c1c1c1; margin: 652px 0 auto; flex: none; }
    .top { position: absolute; left: 1737px; top: 734px; width: 70px; height: 64px; border-radius: 6px; background: #ff0029; display: flex; align-items: center; justify-content: center; z-index: 3; }
  `;
  render() {
    return html`
      <div class="view">
        <header>
          <svg width="28" height="32" viewBox="0 0 28 32" fill="#ff0029"><path d="M3.500 0C4.400 0 4.500.7 4.500 1v8.500h1V1c0-.6.3-1 1.300-1h1.400c1 0 1.300.4 1.300 1v8.500h1V1c0-.3.100-1 1-1h1.300c.9 0 1 .5 1 1 .4 3 .7 7 .7 9.500 0 2.500-1.500 4.500-4 5.500l.6 14c.1 1.200-.5 2-1.600 2H5.400c-1 0-1.700-.8-1.600-2L4.500 16C2 15 .5 13 .5 10.500.5 8 .9 4 1.300 1c.1-.7.4-1 1-1z"/><path d="M17.500 18.500C15 9 20 0 25.500 0 26.700 0 27 .6 27 1.500v29c0 1-.6 1.500-1.500 1.500h-4c-1.100 0-1.600-.7-1.500-1.700l.8-10.300h-2c-.7 0-1.100-.8-1.300-1.500z"/></svg>
          <span class="brand">Food</span>
          <nav>${["Home", "Specialty", "Popular Food", "Review", "Order"].map(n => html`<span>${n}</span>`)}</nav>
        </header>
        <div class="cards"><div class="card"></div><div class="card"></div><div class="card"></div></div>
        <h1>Order <span class="hot">Pizza here</span></h1>
        <form>
          ${options.map((o, i) => html`<div class=${classMap({ field: true, last: i === options.length - 1 })}><span>${o}</span>
            <svg width="10" height="7" viewBox="0 0 10 7" fill="none"><path d="M1 1.200l4 4 4-4" stroke="#000" stroke-width="2"/></svg></div>`)}
          <div class="field qty"><span>1</span></div>
          <div class="submit">order now</div>
        </form>
      </div>
      <div class="scroll">
        <svg width="7" height="4" viewBox="0 0 7 4"><path fill="#505050" d="M0 4l3.500-4L7 4z"/></svg>
        <span class="thumb"></span>
        <svg width="7" height="4" viewBox="0 0 7 4"><path fill="#505050" d="M0 0l3.500 4L7 0z"/></svg>
      </div>
      <div class="top"><svg width="34" height="22" viewBox="0 0 34 22" fill="none"><path d="M5.300 17L17 5.200 28.700 17" stroke="#fff" stroke-width="7.600" stroke-linecap="round" stroke-linejoin="round"/></svg></div>`;
  }
}

const downloads: [string, number, boolean][] = [["thumbs-down.jpg", 125, false], ["abuse.jpg", 69, false], ["y2mate.com….mp4", 141, true]];

@customElement("download-shelf")
export class DownloadShelf extends LitElement {
  static styles = css`
    :host { display: flex; align-items: center; box-sizing: border-box; height: 61px; border-top: 1px solid #c2c2c4; background: #f7f7f7; font: 15px "Noto Sans", sans-serif; color: #414144; padding: 0 0 1px 4px; }
    svg { display: block; flex: none; }
    .item { display: flex; align-items: center; box-sizing: border-box; width: 233px; height: 48px; padding: 0 18px 0 16px; border-right: 1px solid #c2c2c2; gap: 13px; }
    .item fit-text { line-height: 20px; margin-top: -1px; }
    .chev { margin-left: auto; }
    .all { margin-left: auto; box-sizing: border-box; width: 89px; height: 32px; border: 1px solid #bebebe; border-radius: 4px; background: #e9e9e9; font-size: 14px; font-weight: 600; text-align: center; line-height: 29px; }
    .x { margin: 0 13px; }
  `;
  render() {
    return html`
      ${downloads.map(([name, w, video]) => html`
        <div class="item">
          <svg width="16" height="15" viewBox="0 0 16 15"><rect x=".4" y=".4" width="15.200" height="14" rx="2" fill=${video ? "#3a2340" : "#cc08bf"} stroke=${video ? "#5c4a60" : "#8a4a90"} stroke-width=".8"/>
            <path fill="#f0d6f0" d=${video ? "M5.500 4v7l5.500-3.500z" : "M4 10.500l2-3.500 1.500 2 1-1 1.500 2.500zM9 4h1.700v1.700H9z"}/></svg>
          ${fit(name, w)}
          <svg class="chev" width="10" height="7" viewBox="0 0 10 7" fill="none"><path d="M.8 6L5 1.500 9.200 6" stroke="#6e6e70" stroke-width="1.600"/></svg>
        </div>`)}
      <div class="all">${fit("Show all", 58)}</div>
      <svg class="x" width="10" height="10" viewBox="0 0 10 10"><path d="M.7.7l8.600 8.600M9.300.7L.7 9.300" stroke="#707070" stroke-width="2"/></svg>`;
  }
}

@customElement("app-root")
export class AppRoot extends LitElement {
  static styles = css`
    :host { display: block; width: 1920px; height: 1080px; overflow: hidden; background: #f7f7f7; }
    svg { display: block; flex: none; overflow: visible; }
    .panel { display: grid; grid-template-columns: 1fr auto 1fr; align-items: center; height: 27px; background: #1d1d1d; color: #f0f0f0; font: 14.200px "Noto Sans", sans-serif; }
    .left { display: flex; align-items: center; padding-left: 12px; }
    .logo { margin: 0 6px 0 35px; }
    .caret { margin-left: 6px; }
    .clock { display: flex; align-items: center; gap: 13px; padding-left: 93px; margin-top: -1px; }
    .dot { width: 8px; height: 8px; border-radius: 50%; background: #f4f4f4; }
    .tray { display: flex; align-items: center; justify-content: flex-end; padding-right: 16px; }
    .tray .a { width: 40px; display: flex; justify-content: center; }
    .tray .b { width: 28px; display: flex; justify-content: center; }
    .tray .wifi { margin-left: 11px; }
    .tray .end { margin-left: 4px; }
    .desk { display: flex; }
    .window { flex: 1; min-width: 0; }
  `;
  render() {
    return html`
      <div class="panel">
        <div class="left">
          ${fit("Activities", 63)}
          <svg class="logo" width="15" height="15" viewBox="0 0 16 16"><circle cx="8" cy="8" r="8" fill="#8a8a8a"/><path fill="#c6c6c6" d="M8 4h7a8 8 0 0 1-7 12l4-6z"/><path fill="#666" d="M1.300 4A8 8 0 0 0 8 16l2-4-5-3z"/><circle cx="8" cy="8" r="3.900" fill="#e4e4e4"/><circle cx="8" cy="8" r="3" fill="#777"/></svg>
          ${fit("Google Chrome", 104)}
          <svg class="caret" width="9" height="5" viewBox="0 0 9 5"><path fill="#f0f0f0" d="M0 0h9L4.500 5z"/></svg>
        </div>
        <div class="clock">${fit("Hag 2  15:26", 80)}<span class="dot"></span></div>
        <div class="tray">
          <span class="a">${cone(16)}</span><span class="a">${cone(16)}</span>
          <span class="a"><svg width="14" height="14" viewBox="0 0 14 14" fill="none"><path d="M5 1.500v3M8.500 1.500v3M1.300 5h3.400M9 5h3M1.300 8.500h3.400M5 9v3.500" stroke="#dcdcdc" stroke-width="2.200" stroke-linecap="round"/><circle cx="9.500" cy="9.500" r="3.700" fill="#e8267a"/></svg></span>
          <span class="b wifi"><svg width="16" height="13" viewBox="0 0 16 13" fill="none"><path d="M.8 4.300a11 11 0 0 1 14.400 0" stroke="#f0f0f0" stroke-width="1.400"/><path fill="#f4f4f4" d="M2.500 6.300a9 9 0 0 1 11 0L8 12.800z"/></svg></span>
          <span class="b"><svg width="15" height="14" viewBox="0 0 15 14" fill="none"><path fill="#f4f4f4" d="M0 4.500h3L7 1v12L3 9.500H0z"/><path d="M9 4.500c1.300 1.300 1.300 3.700 0 5" stroke="#ddd" stroke-width="1.300"/><path d="M11.500 2.500c2.500 2.500 2.500 6.500 0 9" stroke="#777" stroke-width="1.200"/></svg></span>
          <span class="b"><svg width="10" height="15" viewBox="0 0 10 15" fill="none"><path d="M.8 2h8.400v12.200H.8z" stroke="#f4f4f4" stroke-width="1.200"/><path fill="#f4f4f4" d="M3 0h4v2H3zM2 7h6v6H2z"/></svg></span>
          <svg class="end" width="9" height="5" viewBox="0 0 9 5"><path fill="#f0f0f0" d="M0 0h9L4.500 5z"/></svg>
        </div>
      </div>
      <div class="desk">
        <desktop-dock></desktop-dock>
        <div class="window"><browser-chrome></browser-chrome><food-page></food-page><download-shelf></download-shelf></div>
      </div>`;
  }
}
